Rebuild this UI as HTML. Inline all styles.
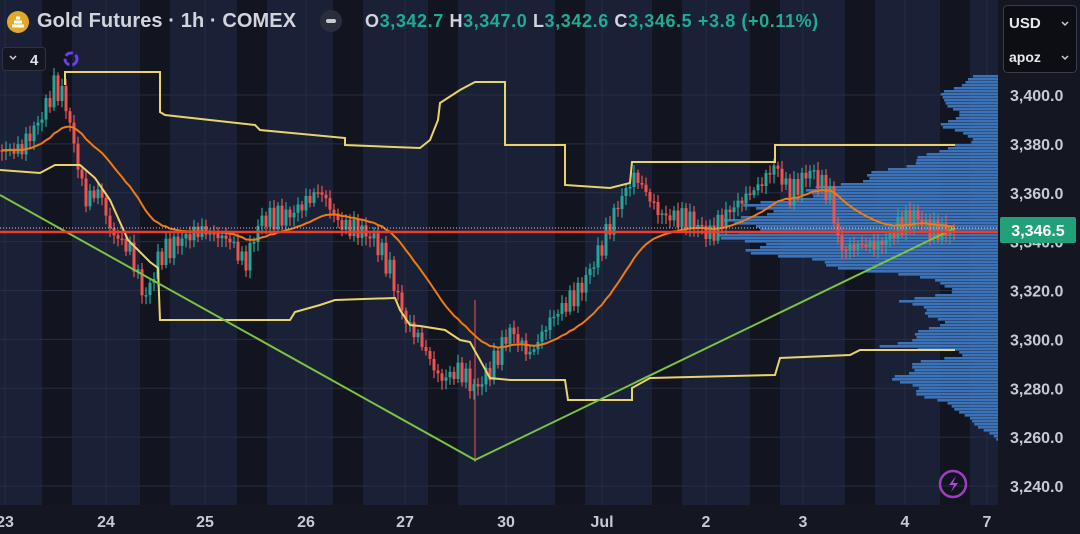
<!DOCTYPE html>
<html><head><meta charset="utf-8"><style>
html,body{margin:0;padding:0;width:1080px;height:534px;overflow:hidden;background:#141722;font-family:"Liberation Sans",sans-serif}
#c{position:absolute;left:0;top:0}
.hdr{position:absolute;left:0;top:6px;height:32px;color:#d1d4dc;white-space:nowrap}
.nm{position:absolute;left:37px;top:4px;font-size:20px;font-weight:bold;letter-spacing:0.1px}
.oh{position:absolute;left:365px;top:5px;font-size:18px;font-weight:bold;letter-spacing:0.6px}
.g{color:#22ab94}
</style></head><body>
<svg id="c" width="1080" height="534" xmlns="http://www.w3.org/2000/svg">
<rect width="1080" height="534" fill="#141722"/>
<rect x="0" y="0" width="998" height="505" fill="#1a2036"/>
<g id="bands" fill="#12151f"></g>
<g id="grid" stroke="#272d42" stroke-width="1"></g>
<g id="vp" fill="#3c73b8"></g>
<g id="cnd"></g>
<polyline id="ma" fill="none" stroke="#f07b12" stroke-width="2"/>
<polyline fill="none" stroke="#e8d46a" stroke-width="2" points="65,85 65,72 160,72 160,112 165,115 255,125 260,130 345,138 345,145 420,148 430,140 438,120 440,103 460,90 475,82 505,82 505,145 565,145 565,185 610,188 630,183 632,162 775,162 775,145 955,145"/>
<polyline fill="none" stroke="#e8d46a" stroke-width="2" points="0,170 40,173 55,165 80,165 95,178 110,200 128,240 150,262 158,268 160,320 290,320 295,312 320,305 335,300 395,298 400,310 410,325 420,326 445,330 460,340 470,342 490,378 510,380 565,380 568,400 632,400 632,388 650,378 775,375 780,358 850,355 860,350 955,350"/>
<polyline fill="none" stroke="#7cc243" stroke-width="2" points="0,195 475,460 955,228"/>
<line x1="0" y1="228" x2="998" y2="228" stroke="#c8cdd8" stroke-width="1" stroke-dasharray="1,2"/>
<line x1="0" y1="232" x2="998" y2="232" stroke="#f23c2a" stroke-width="2.5"/>
<g id="plbl" fill="#c8cad2" font-size="16" font-weight="bold" font-family="Liberation Sans"></g>
<rect x="1000" y="217" width="76" height="26" rx="2" fill="#22a07a"/>
<text x="1038" y="236" fill="#fff" font-size="16" font-weight="bold" text-anchor="middle" font-family="Liberation Sans">3,346.5</text>
<g id="dlbl" fill="#c8cad2" font-size="16" font-weight="bold" font-family="Liberation Sans" text-anchor="middle"></g>
<rect x="1003.5" y="5.5" width="73" height="67" rx="4" fill="#0c0e13" stroke="#3a3e4a"/>
<text x="1009" y="28" fill="#e6e8ee" font-size="15" font-weight="bold">USD</text>
<text x="1009" y="62" fill="#e6e8ee" font-size="14" font-weight="bold">apoz</text>
<path d="M1062,22 l3,3 l3,-3 M1062,56 l3,3 l3,-3" stroke="#ccc" fill="none" stroke-width="1.5"/>
<circle cx="953" cy="484" r="13" fill="none" stroke="#9b3fbf" stroke-width="2.5"/>
<path d="M956,476 l-7,9 h5 l-3,7 l7,-9 h-5 z" fill="#b048d8"/>
<circle cx="18" cy="22" r="11" fill="#e2a82a"/>
<path d="M12,26 h12 M14,22 h8 M16,18 h4" stroke="#fff" stroke-width="3"/>
<circle cx="331" cy="21" r="11" fill="#2a2e3c"/>
<rect x="326" y="19" width="10" height="4" rx="2" fill="#c8cad2"/>
<rect x="2.5" y="47.5" width="43" height="23" rx="3" fill="#141722" stroke="#2e3342"/>
<path d="M10,56 l3,3 l3,-3" stroke="#ccc" fill="none" stroke-width="1.5"/>
<text x="30" y="65" fill="#e0e2e8" font-size="15" font-weight="bold">4</text>
<circle cx="71" cy="59" r="6" fill="none" stroke="#6b3ff0" stroke-width="3" stroke-dasharray="8,3"/>
</svg>
<div class="hdr"><span class="nm">Gold Futures · 1h · COMEX</span><span class="oh">O<span class="g">3,342.7</span> H<span class="g">3,347.0</span> L<span class="g">3,342.6</span> C<span class="g">3,346.5</span> <span class="g">+3.8 (+0.11%)</span></span></div>
<script>
var NS="http://www.w3.org/2000/svg";
function el(p,t,a){var e=document.createElementNS(NS,t);for(var k in a)e.setAttribute(k,a[k]);document.getElementById(p).appendChild(e);return e;}
[42,140,237,333,428,555,652,750,845,940].forEach(function(x){el("bands","rect",{x:x,y:0,width:30,height:505});});
var dates=[[5,"23"],[106,"24"],[205,"25"],[306,"26"],[405,"27"],[506,"30"],[602,"Jul"],[706,"2"],[803,"3"],[905,"4"],[987,"7"]];
dates.forEach(function(d){el("grid","line",{x1:d[0],y1:0,x2:d[0],y2:505});var t=el("dlbl","text",{x:d[0],y:527});t.textContent=d[1];});
for(var p=3240;p<=3400;p+=20){var y=95+(3400-p)*2.444;el("grid","line",{x1:0,y1:y,x2:998,y2:y});var t=el("plbl","text",{x:1010,y:y+6});t.textContent=(p+"").replace(/^(\d)/,"$1,")+".0";}
var wp=[[72,0],[75,25],[90,55],[100,65],[110,40],[125,60],[140,20],[145,55],[160,90],[175,140],[190,200],[205,260],[225,280],[240,285],[255,240],[270,140],[280,60],[290,50],[300,100],[310,80],[320,60],[335,90],[345,120],[352,30],[360,80],[375,110],[390,90],[410,40],[420,30],[435,5],[440,0]];
function wAt(y){for(var i=1;i<wp.length;i++){if(y<=wp[i][0]){var a=wp[i-1],b=wp[i];return a[1]+(b[1]-a[1])*(y-a[0])/(b[0]-a[0]);}}return 0;}
for(var y=72;y<440;y+=3){var w=wAt(y)*(0.92+0.08*Math.sin(y*1.7));if(w>1)el("vp","rect",{x:998-w,y:y,width:w,height:2.6});}
var kp=[[0,150],[20,150],[40,120],[55,85],[65,100],[75,150],[85,200],[100,190],[110,230],[130,250],[145,300],[160,255],[180,240],[200,230],[230,240],[245,265],[260,220],[290,215],[320,190],[340,225],[360,230],[375,240],[390,270],[405,320],[420,340],[440,380],[460,370],[475,390],[490,370],[510,330],[530,355],[550,320],[580,290],[600,250],[620,200],[635,175],[660,215],[690,220],[710,235],[730,210],[760,185],[775,165],[790,195],[810,170],[830,195],[840,250],[860,245],[880,245],[900,225],[915,215],[930,230],[955,232]];
function pAt(x){for(var i=1;i<kp.length;i++){if(x<=kp[i][0]){var a=kp[i-1],b=kp[i];return a[1]+(b[1]-a[1])*(x-a[0])/(b[0]-a[0]);}}return 232;}
var prev=pAt(0),ma=[],s=prev;
for(var x=2;x<=955;x+=4){var c=pAt(x)+7*Math.sin(x*0.9)+5*Math.sin(x*2.3);var o=prev;var hi=Math.min(o,c)-3-5*Math.abs(Math.sin(x*1.3));var lo=Math.max(o,c)+3+6*Math.abs(Math.sin(x*0.7));var col=c<o?"#26a69a":"#ef5350";
el("cnd","line",{x1:x,y1:hi,x2:x,y2:lo,stroke:col,"stroke-width":1.2});el("cnd","rect",{x:x-1.5,y:Math.min(o,c),width:3,height:Math.max(1.5,Math.abs(c-o)),fill:col});prev=c;s+=(c-s)*0.07;ma.push(x.toFixed(1)+","+s.toFixed(1));}
el("grid","line",{x1:475,y1:300,x2:475,y2:462,stroke:"#ef5350"});
document.getElementById("ma").setAttribute("points",ma.join(" "));
</script>
</body></html>
